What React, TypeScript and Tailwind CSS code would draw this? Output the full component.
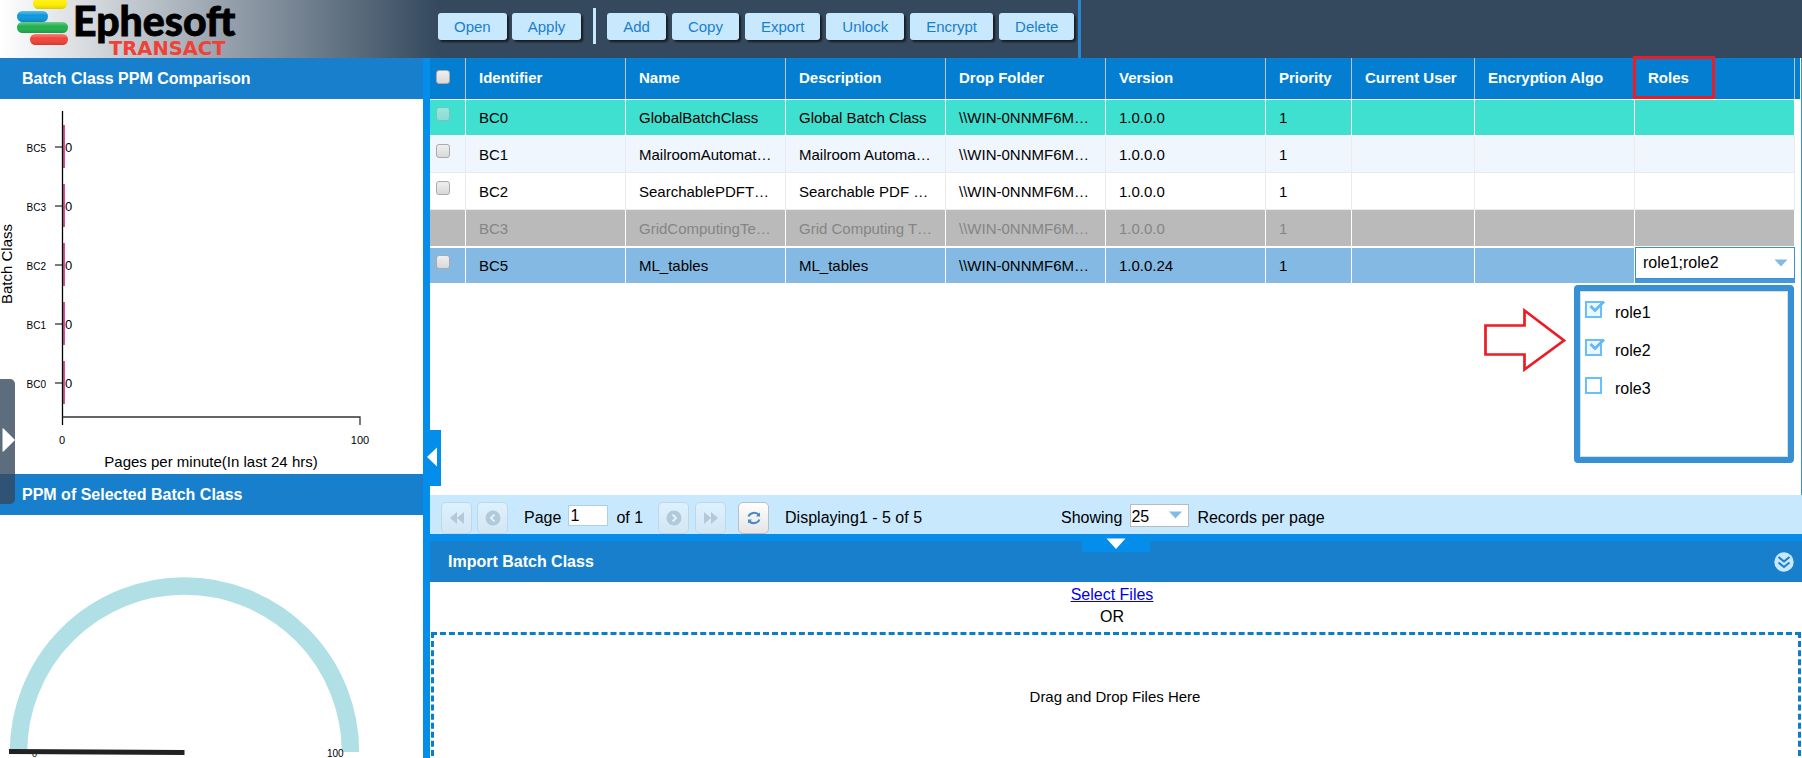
import { useState } from "react";
import type { ReactNode } from "react";

const TOOLBAR_LEFT = ["Open", "Apply"];
const TOOLBAR_RIGHT = ["Add", "Copy", "Export", "Unlock", "Encrypt", "Delete"];

const COLUMNS = [
  { label: "Identifier", width: "w-[160px]" },
  { label: "Name", width: "w-[160px]" },
  { label: "Description", width: "w-[160px]" },
  { label: "Drop Folder", width: "w-[160px]" },
  { label: "Version", width: "w-[160px]" },
  { label: "Priority", width: "w-[86px]" },
  { label: "Current User", width: "w-[123px]" },
  { label: "Encryption Algo", width: "w-[160px]" },
];

const FOLDER = "\\\\WIN-0NNMF6M…";

const ROWS = [
  { id: "BC0", name: "GlobalBatchClass", description: "Global Batch Class", version: "1.0.0.0", style: "bg-[#40e0d0]", line: "border-white", check: "disabled" },
  { id: "BC1", name: "MailroomAutomat…", description: "Mailroom Automa…", version: "1.0.0.0", style: "bg-[#eff6fd]", line: "border-[#e9ebed]", check: "enabled" },
  { id: "BC2", name: "SearchablePDFT…", description: "Searchable PDF …", version: "1.0.0.0", style: "bg-white", line: "border-[#e9ebed]", check: "enabled" },
  { id: "BC3", name: "GridComputingTe…", description: "Grid Computing T…", version: "1.0.0.0", style: "bg-[#bababa] text-[#858585]", line: "border-white", check: "none" },
  { id: "BC5", name: "ML_tables", description: "ML_tables", version: "1.0.0.24", style: "bg-[#84b9e3]", line: "border-white", check: "enabled" },
];

const BARS = [
  { id: "BC5", y: 48 },
  { id: "BC3", y: 107 },
  { id: "BC2", y: 166 },
  { id: "BC1", y: 225 },
  { id: "BC0", y: 284 },
];

function Logo() {
  return (
    <svg width="250" height="58" viewBox="0 0 250 58" role="img" aria-label="Ephesoft Transact">
      <defs>
        <linearGradient id="gloss" x1="0" y1="0" x2="0" y2="1">
          <stop offset="0" stopColor="#fff" stopOpacity="0.35" />
          <stop offset="0.4" stopColor="#fff" stopOpacity="0" />
          <stop offset="1" stopColor="#000" stopOpacity="0.15" />
        </linearGradient>
      </defs>
      {[
        { x: 33, y: -2, w: 34, fill: "#ffee00" },
        { x: 17, y: 11, w: 31, fill: "#0c98dc" },
        { x: 17, y: 22, w: 51, fill: "#22b04e" },
        { x: 30, y: 34, w: 38, fill: "#f04438" },
      ].map((p) => (
        <g key={p.fill}>
          <rect x={p.x} y={p.y} width={p.w} height="11" rx="5.5" fill={p.fill} />
          <rect x={p.x} y={p.y} width={p.w} height="11" rx="5.5" fill="url(#gloss)" />
        </g>
      ))}
      <text x="73" y="36" fontFamily="Lato, sans-serif" fontWeight="900" fontSize="41" fill="#000" stroke="#000" strokeWidth="0.8">
        Ephesoft
      </text>
      <text x="109" y="55" fontFamily="'DejaVu Sans', sans-serif" fontWeight="700" fontSize="19.5" fill="#f04136">
        TRANSACT
      </text>
    </svg>
  );
}

function ToolButton({ children }: { children: ReactNode }) {
  return (
    <button className="h-[27px] rounded-[3px] bg-[#c8e8fe] px-4 pt-0.5 text-[15px] text-[#187fcc] shadow-[2px_2px_2px_#111c]">
      {children}
    </button>
  );
}

function PanelTitle({ children, className = "pl-[22px]" }: { children: ReactNode; className?: string }) {
  return (
    <div className={`flex h-[41px] shrink-0 items-center justify-between bg-[#187fcc] pr-2 text-white ${className}`}>
      {children}
    </div>
  );
}

function Check({ label, disabled = false }: { label: string; disabled?: boolean }) {
  return (
    <input
      type="checkbox"
      aria-label={label}
      disabled={disabled}
      className="block size-[14px] appearance-none rounded-[3px] border border-[#aaa] bg-linear-to-b from-[#efefef] to-[#d9d9d9] checked:bg-[#8ec5f0] disabled:opacity-50"
    />
  );
}

function ComparisonChart() {
  return (
    <svg width="423" height="375" viewBox="0 0 423 375" className="block font-['Liberation_Sans',Arial,sans-serif]">
      {BARS.map((b) => (
        <g key={b.id}>
          <rect x="63" y={b.y - 22} width="2" height="43" fill="#d4509f" />
          <path d={`M55 ${b.y}H62`} stroke="#333" strokeWidth="1.3" />
          <text x="46" y={b.y + 5} textAnchor="end" fontSize="10">
            {b.id}
          </text>
          <text x="65" y={b.y + 5} fontSize="13">
            0
          </text>
        </g>
      ))}
      <g stroke="#000" strokeWidth="1.3" fill="none">
        <path d="M62.5 12V326" />
        <path d="M62.5 318H360V326" stroke="#333" />
      </g>
      <text x="62" y="345" textAnchor="middle" fontSize="11">0</text>
      <text x="360" y="345" textAnchor="middle" fontSize="11">100</text>
      <text x="211" y="368" textAnchor="middle" fontSize="15">Pages per minute(In last 24 hrs)</text>
      <text transform="translate(12 165) rotate(-90)" textAnchor="middle" fontSize="15">Batch Class</text>
    </svg>
  );
}

function Gauge() {
  return (
    <svg width="423" height="243" viewBox="0 0 423 243" className="block font-['Liberation_Sans',Arial,sans-serif]">
      <path d="M18.5 237A166 166 0 0 1 350.5 237" fill="none" stroke="#b0e0e6" strokeWidth="17.5" />
      <text x="32" y="242" fontSize="9">0</text>
      <text x="327" y="242" fontSize="10">100</text>
      <path d="M9 234L184.500 235V240L9 239Z" fill="#222" />
    </svg>
  );
}

function RolesCell() {
  const [open, setOpen] = useState(true);
  const [roles, setRoles] = useState([
    { name: "role1", on: true },
    { name: "role2", on: true },
    { name: "role3", on: false },
  ]);

  const toggle = (name: string) =>
    setRoles(roles.map((r) => (r.name === name ? { ...r, on: !r.on } : r)));

  return (
    <div className="relative h-9 bg-[#4497da]">
      <div className="flex h-8 items-center justify-between border border-[#3690d6] bg-white pr-1.5 pl-[7px]">
        <input
          aria-label="Roles"
          readOnly
          value={roles.filter((r) => r.on).map((r) => r.name).join(";")}
          className="w-28 text-[16px] outline-none"
        />
        <button aria-label="Toggle roles" onClick={() => setOpen(!open)}>
          <svg width="14" height="8" viewBox="0 0 14 8">
            <path d="M0.500 0.500H13.500L7 7.500Z" fill="#84bbe6" />
          </svg>
        </button>
      </div>

      {open && (
        <div className="absolute top-full right-px z-10 mt-0.5 h-[178px] w-[220px] rounded-[4px] border-6 border-[#3690d6] bg-white">
          <div className="flex h-full flex-col border border-[#ddd] px-1 pt-0.5">
            {roles.map((r) => (
              <label key={r.name} className="flex h-[38px] items-center gap-[9px]">
                <span className="relative mb-1.5 flex size-[21px]">
                  <input
                    type="checkbox"
                    checked={r.on}
                    onChange={() => toggle(r.name)}
                    className="mt-px size-[17px] appearance-none border-2 border-[#66bfff] bg-white checked:bg-[#eef7ff]"
                  />
                  {r.on && (
                    <svg className="pointer-events-none absolute inset-0" width="21" height="19" viewBox="0 0 21 19">
                      <path d="M5.500 6L10 10.500L19 1.500" fill="none" stroke="#66b8f5" strokeWidth="3" />
                    </svg>
                  )}
                </span>
                <span className="text-[16px]">{r.name}</span>
              </label>
            ))}
          </div>
          {/* callout pointing at the role list */}
          <svg className="absolute top-4 -left-24" width="86" height="66" viewBox="0 0 86 66">
            <path d="M1.500 18.500H40.500V3.500L80 33.500L40.500 62.500V47.500H1.500Z" fill="none" stroke="#ed1c24" strokeWidth="2.700" />
          </svg>
        </div>
      )}
    </div>
  );
}

function BatchClassTable() {
  return (
    <table className="w-full table-fixed border-separate border-spacing-0 text-[15px]">
      <thead>
        <tr className="h-[41px] bg-[#047ed0] text-left text-white">
          <th className="w-9 border-r border-[#b9c3cc] p-0 pb-[3px] pl-1.5">
            <Check label="Select all" />
          </th>
          {COLUMNS.map((c) => (
            <th key={c.label} className={`${c.width} border-r border-[#b9c3cc] p-0 pl-[13px] font-bold`}>
              {c.label}
            </th>
          ))}
          <th className="relative w-[160px] border-r border-[#b9c3cc] p-0 pl-[13px] font-bold">
            Roles
            <span className="absolute -top-0.5 -left-0.5 h-[43px] w-[82px] border-3 border-[#ed1c24]" />
          </th>
          <th className="p-0" aria-hidden="true" />
        </tr>
      </thead>
      <tbody>
        {ROWS.map((row, i) => {
          const topLine = i === 0 || row.id === "BC5";
          const cell = `border-r border-b ${topLine ? "border-t" : ""} ${row.line} ${row.style}`;
          return (
            <tr key={row.id} className="h-[37px]">
              <td className={`${cell} p-0 ${topLine ? "pt-[7px]" : "pt-2"} pl-1.5 align-top`}>
                {row.check !== "none" && <Check label={`Select ${row.id}`} disabled={row.check === "disabled"} />}
              </td>
              {[row.id, row.name, row.description, FOLDER, row.version, "1", "", ""].map((value, n) => (
                <td key={n} className={`${cell} truncate p-0 pt-0.5 pr-2 pl-[13px]`}>
                  {value}
                </td>
              ))}
              {row.id === "BC5" ? (
                <td className="border-b border-white p-0 align-top">
                  <RolesCell />
                </td>
              ) : (
                <td className={cell} />
              )}
              <td className="p-0" />
            </tr>
          );
        })}
      </tbody>
    </table>
  );
}

function PagerButton({ label, active = false, children }: { label: string; active?: boolean; children: ReactNode }) {
  return (
    <button
      aria-label={label}
      disabled={!active}
      className="flex h-8 w-[31px] items-center justify-center rounded-[5px] border border-[#b8bfc4] bg-linear-to-b from-white to-[#e4e4e4] disabled:opacity-40"
    >
      {children}
    </button>
  );
}

function Pager() {
  return (
    <div className="flex h-[39px] shrink-0 items-center bg-[#c8e8fe] pt-1.5 pl-[11px] text-[16px]">
      <div className="flex gap-[5px]">
        <PagerButton label="First page">
          <svg width="16" height="14" viewBox="0 0 16 14"><path d="M8 1V13L1 7ZM15 1V13L8 7Z" fill="#8f9ba3" /></svg>
        </PagerButton>
        <PagerButton label="Previous page">
          <svg width="16" height="16" viewBox="0 0 16 16">
            <circle cx="8" cy="8" r="7.500" fill="#8f9ba3" />
            <path d="M9.500 4.500L6 8L9.500 11.500" fill="none" stroke="#fff" strokeWidth="2" />
          </svg>
        </PagerButton>
      </div>
      <label className="ml-4 flex items-center gap-[7px]">
        Page
        <input defaultValue="1" className="-mt-1 h-[21px] w-10 border border-[#a9d0ee] bg-white pl-px outline-none" />
      </label>
      <span className="ml-2">of 1</span>
      <div className="ml-[15px] flex gap-[6px]">
        <PagerButton label="Next page">
          <svg width="16" height="16" viewBox="0 0 16 16">
            <circle cx="8" cy="8" r="7.500" fill="#8f9ba3" />
            <path d="M6.500 4.500L10 8L6.500 11.500" fill="none" stroke="#fff" strokeWidth="2" />
          </svg>
        </PagerButton>
        <PagerButton label="Last page">
          <svg width="16" height="14" viewBox="0 0 16 14"><path d="M8 1V13L15 7ZM1 1V13L8 7Z" fill="#8f9ba3" /></svg>
        </PagerButton>
      </div>
      <div className="ml-3">
        <PagerButton label="Refresh" active>
          <svg width="14" height="14" viewBox="0 0 14 14" fill="none" stroke="#4a86c4" strokeWidth="2">
            <path d="M1.500 5.500C3 1.500 9 0.500 12 4M12.500 8.500C11 12.500 5 13.500 2 10" />
            <path d="M13 1.500V5.500H9ZM1 12.500V8.500H5Z" fill="#4a86c4" stroke="none" />
          </svg>
        </PagerButton>
      </div>
      <span className="ml-4">Displaying1 - 5 of 5</span>
      <label className="ml-[139px] flex items-center gap-2">
        Showing
        <span className="relative -mt-1 block">
          <select className="block h-[23px] w-[59px] appearance-none border border-[#bbb] bg-white outline-none">
            <option>25</option>
            <option>50</option>
          </select>
          <svg className="pointer-events-none absolute top-[7px] right-[7px]" width="13" height="8" viewBox="0 0 13 8">
            <path d="M0 0.500H13L6.500 7.500Z" fill="#84bbe6" />
          </svg>
        </span>
        Records per page
      </label>
    </div>
  );
}

export default function App() {
  return (
    <div className="flex h-screen flex-col overflow-hidden bg-white font-['Liberation_Sans',Arial,sans-serif] text-black">
      <header className="flex h-[58px] shrink-0 bg-[#34495e]">
        <div className="w-[438px] shrink-0 bg-[linear-gradient(to_right,#fff,#34495e)]">
          <Logo />
        </div>
        <div className="flex items-start border-r-3 border-[#2b86d0] pt-[13px] pr-1">
          <div className="flex gap-[5px]">
            {TOOLBAR_LEFT.map((t) => <ToolButton key={t}>{t}</ToolButton>)}
          </div>
          <span className="-mt-[5px] mr-[11px] ml-3 h-9 w-[3px] bg-[#c8e8fe]" />
          <div className="flex gap-1.5">
            {TOOLBAR_RIGHT.map((t) => <ToolButton key={t}>{t}</ToolButton>)}
          </div>
        </div>
      </header>

      <div className="flex min-h-0 flex-1">
        <aside className="relative flex w-[423px] shrink-0 flex-col overflow-hidden">
          <PanelTitle>
            <h2 className="text-[16px] font-bold">Batch Class PPM Comparison</h2>
          </PanelTitle>
          <ComparisonChart />
          <PanelTitle>
            <h2 className="text-[16px] font-bold">PPM of Selected Batch Class</h2>
          </PanelTitle>
          <Gauge />
          <button aria-label="Open menu" className="absolute top-[321px] left-0 flex h-[125px] w-[15px] items-center justify-end rounded-r-[5px] bg-[#34495e]/80 pb-[3px]">
            <svg width="13" height="24" viewBox="0 0 13 24"><path d="M0.500 1Q0.500 0 1.500 0.500L13 12L1.500 23.500Q0.500 24 0.500 23Z" fill="#fff" /></svg>
          </button>
        </aside>

        <div className="relative w-[7px] shrink-0 bg-[#048dea]">
          <button aria-label="Collapse left panel" className="absolute top-[372px] left-0 z-10 flex h-14 w-[18px] items-center justify-center bg-[#048dea] pb-[3px]">
            <svg width="12" height="20" viewBox="0 0 12 20"><path d="M11 0.500V19.500L1 10Z" fill="#fff" /></svg>
          </button>
        </div>

        <main className="flex min-w-0 flex-1 flex-col">
          <div className="min-h-0 flex-1 border-r border-[#3690d6] pr-px">
            <BatchClassTable />
          </div>
          <Pager />
          <div className="relative h-[7px] shrink-0 bg-[#048dea]">
            <button aria-label="Collapse import panel" className="absolute top-0 left-1/2 flex h-[18px] w-[68px] -translate-x-1/2 items-end justify-center bg-[#048dea] pb-[3px]">
              <svg width="20" height="11" viewBox="0 0 20 11"><path d="M0.500 0.500H19.500L10 11Z" fill="#fff" /></svg>
            </button>
          </div>
          <PanelTitle className="pl-[18px]">
            <h2 className="text-[16px] font-bold">Import Batch Class</h2>
            <button aria-label="Collapse">
              <svg width="20" height="20" viewBox="0 0 20 20">
                <circle cx="10" cy="10" r="9.700" fill="#c8e8fe" />
                <path d="M4.500 5L10 9.500L15.500 5M4.500 10.500L10 15L15.500 10.500" fill="none" stroke="#187fcc" strokeWidth="2" />
              </svg>
            </button>
          </PanelTitle>
          <section className="flex h-[176px] shrink-0 flex-col overflow-hidden text-center">
            <div className="pt-0.5 pr-2 text-[16px] leading-[22px]">
              <a href="#" className="text-[#0000ee] underline">Select Files</a>
              <div>OR</div>
            </div>
            <div className="mx-px mt-1 flex h-[260px] shrink-0 justify-center border-3 border-dashed border-[#0a7dcb] pt-[51px] pr-0.5 text-[15px]">
              Drag and Drop Files Here
            </div>
          </section>
        </main>
      </div>
    </div>
  );
}
